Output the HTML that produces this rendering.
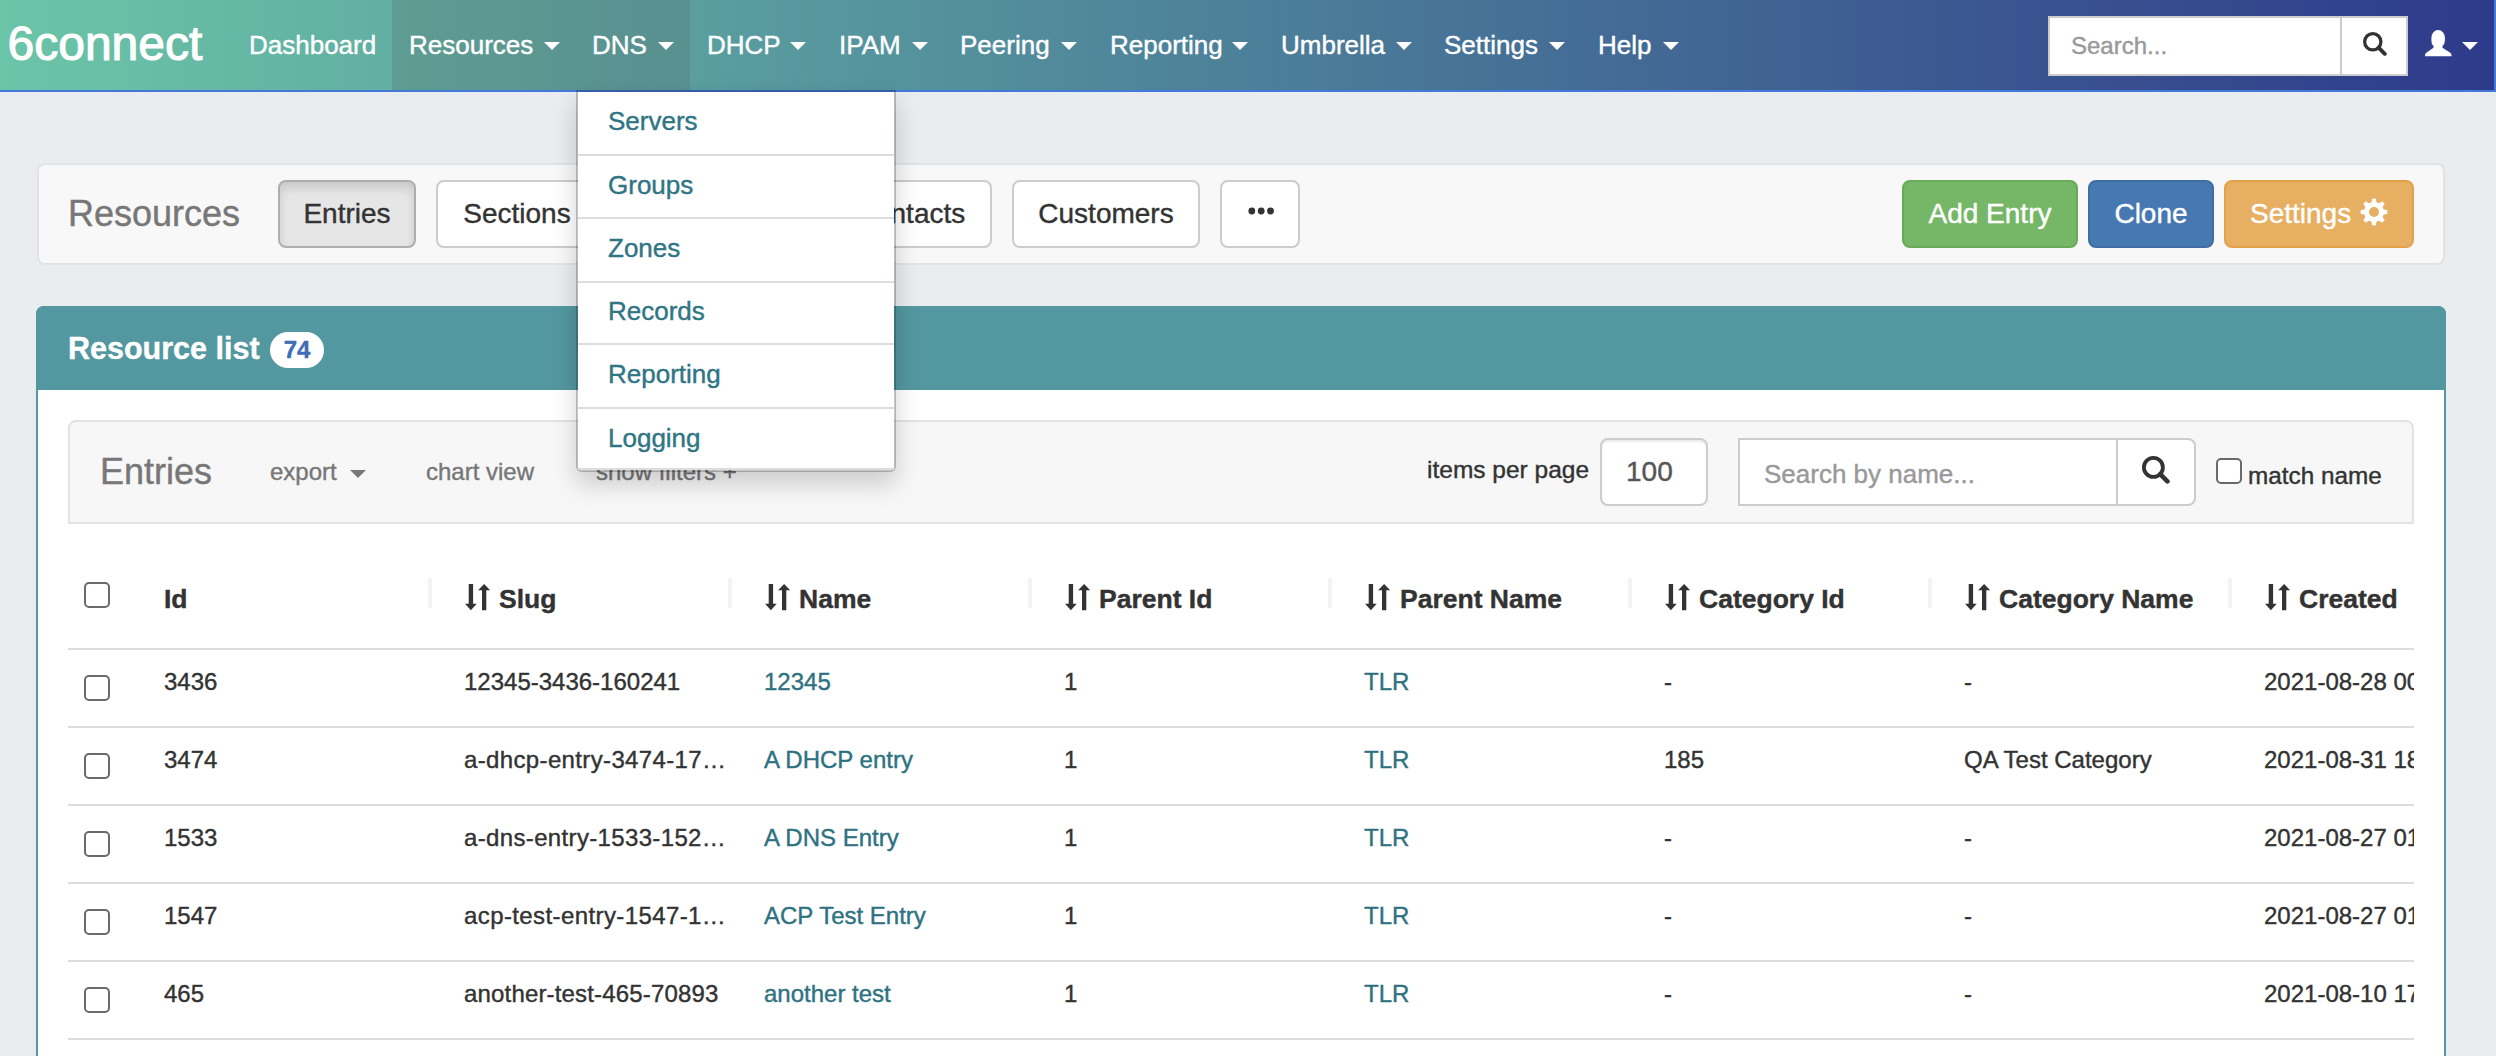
<!DOCTYPE html>
<html><head><meta charset="utf-8">
<style>
*{box-sizing:border-box;margin:0;padding:0}
html,body{width:2496px;height:1056px;overflow:hidden}
body{background:#e9edf0;font-family:"Liberation Sans",sans-serif;color:#333;position:relative}
.a{position:absolute;white-space:nowrap;line-height:1}
/* navbar */
#nav{position:absolute;left:0;top:0;width:2496px;height:92px;background:linear-gradient(to right,#6bc5a7,#2e3a8b);border-bottom:2px solid #4479dc;border-right:2px solid #4479dc}
#nav .dark{position:absolute;left:392px;top:0;width:298px;height:90px;background:rgba(83,83,83,0.2)}
#nav .it{position:absolute;white-space:nowrap;top:31.6px;font-size:26px;color:#fff;line-height:1}
.caret{position:absolute;width:0;height:0;border-top:8px solid #fff;border-left:8px solid transparent;border-right:8px solid transparent}
#logo{left:7.5px;top:20.4px;font-size:48px;color:#fff;-webkit-text-stroke:1.1px #fff}
.sbox{position:absolute;left:2048px;top:16px;width:360px;height:60px;background:#fff;border:2px solid #ccc}
.sbox .div{position:absolute;left:290px;top:0;width:2px;height:56px;background:#ccc}
/* subnav */
#sub{position:absolute;left:37px;top:162.5px;width:2408px;height:102.5px;background:#f8f8f8;border:2px solid #e2e3e4;border-radius:8px}
.btn{position:absolute;top:180px;height:68px;border:2px solid #ccc;border-radius:8px;background:#fff;font-size:28px;color:#333;text-align:center;line-height:64px}
.btn.active{background:#e6e6e6;border-color:#adadad;box-shadow:inset 0 6px 10px rgba(0,0,0,.125)}
.btn.g{background:#75b667;border-color:#67ab59;color:#fff}
.btn.b{background:#4679b1;border-color:#3e6ca3;color:#fff}
.btn.o{background:#e6af62;border-color:#e2a24a;color:#fff}
/* panel */
#panel{position:absolute;left:36px;top:306px;width:2410px;height:800px;background:#fff;border:2px solid #5397a0;border-radius:8px 8px 0 0}
#phead{position:absolute;left:36px;top:306px;width:2410px;height:84px;background:#5397a0;border-radius:8px 8px 0 0}
.badge{position:absolute;left:270px;top:332px;width:54px;height:36px;border-radius:18px;background:#fff;color:#3f6db5;font-weight:bold;font-size:24px;text-align:center;line-height:36px}
#tb{position:absolute;left:68px;top:420px;width:2346px;height:104px;background:#f7f7f7;border:2px solid #e3e3e3;border-radius:8px 8px 0 0}
.gray{color:#777}
.inp{position:absolute;background:#fff;border:2px solid #ccc;border-radius:8px}
.cb{position:absolute;width:26px;height:26px;border:2px solid #6a6a6a;border-radius:5px;background:#fff}
.hl{position:absolute;left:68px;width:2346px;height:2px;background:#ddd}
.sep{position:absolute;top:578px;width:4px;height:30px;background:#f3f3f3}
.th{position:absolute;white-space:nowrap;top:585.6px;font-size:26.5px;font-weight:bold;color:#333;line-height:1}
.td{position:absolute;white-space:nowrap;font-size:24px;line-height:1;color:#333}
.lnk{color:#2e7282}
/* dropdown */
#dd{position:absolute;left:576px;top:90px;width:320px;height:382px;background:#fff;background-clip:padding-box;border:2px solid rgba(0,0,0,.22);border-radius:0 0 6px 6px;box-shadow:0 12px 24px rgba(0,0,0,.175)}
.ddi{position:absolute;white-space:nowrap;left:608px;font-size:26px;color:#2f7584;line-height:1}
.dds{position:absolute;left:578px;width:316px;height:2px;background:#ddd}
body *{-webkit-text-stroke:0.4px currentColor}
@media (max-width:1300px){html{zoom:0.5}}
</style></head><body>

<div id="nav">
  <div class="dark"></div>
  <div class="a" id="logo">6connect</div>
  <div class="it" style="left:249px">Dashboard</div>
  <div class="it" style="left:409px">Resources</div><div class="caret" style="left:544px;top:42px"></div>
  <div class="it" style="left:592px">DNS</div><div class="caret" style="left:658px;top:42px"></div>
  <div class="it" style="left:707px">DHCP</div><div class="caret" style="left:790px;top:42px"></div>
  <div class="it" style="left:839px">IPAM</div><div class="caret" style="left:912px;top:42px"></div>
  <div class="it" style="left:960px">Peering</div><div class="caret" style="left:1061px;top:42px"></div>
  <div class="it" style="left:1110px">Reporting</div><div class="caret" style="left:1232px;top:42px"></div>
  <div class="it" style="left:1281px">Umbrella</div><div class="caret" style="left:1396px;top:42px"></div>
  <div class="it" style="left:1444px">Settings</div><div class="caret" style="left:1549px;top:42px"></div>
  <div class="it" style="left:1598px">Help</div><div class="caret" style="left:1663px;top:42px"></div>
  <div class="sbox"><div class="div"></div></div>
  <div class="a" style="left:2071px;top:33.7px;font-size:24px;color:#999">Search...</div>
  <div class="caret" style="left:2462px;top:42px"></div>
<svg width="24" height="24" viewBox="0 0 28 28" style="position:absolute;left:2362.7px;top:31.8px"><circle cx="11.4" cy="11.4" r="9.5" fill="none" stroke="#333" stroke-width="3.8"/><path d="M18.2 18.2L25.4 25.4" stroke="#333" stroke-width="4.6" stroke-linecap="round"/></svg><svg width="27" height="27" viewBox="0 0 27 27" style="position:absolute;left:2424.5px;top:29.7px"><path fill="#fff" d="M6.4 8A6.75 8 0 0 1 19.9 8V10.5A6.75 7 0 0 1 17.5 16V17.8L24.5 22.3Q26.5 23.5 26.5 25V26.3H0V25Q0 23.5 2 22.3L8.5 17.8V16A6.75 7 0 0 1 6.4 10.5Z"/></svg>
</div>

<div id="sub"></div>
<div class="a gray" style="left:68px;top:195.8px;font-size:36px">Resources</div>
<div class="btn active" style="left:278px;width:138px">Entries</div>
<div class="btn" style="left:436px;width:162px">Sections</div>
<div class="btn" style="left:618px;width:184px">Categories</div>
<div class="btn" style="left:822px;width:170px;padding-left:6px">Contacts</div>
<div class="btn" style="left:1012px;width:188px">Customers</div>
<div class="btn" style="left:1220px;width:80px"></div>
<div class="btn g" style="left:1902px;width:176px">Add Entry</div>
<div class="btn b" style="left:2088px;width:126px">Clone</div>
<div class="btn o" style="left:2224px;width:190px;text-align:left;padding-left:24px">Settings</div>
<svg width="28" height="28" viewBox="-14 -14 28 28" style="position:absolute;left:2359.9px;top:197.9px"><path fill="#fff" fill-rule="evenodd" d="M-2.19 -10.78L-1.98 -13.25A13.4 13.4 0 0 1 1.98 -13.25L2.19 -10.78A2.6 2.6 0 0 0 6.07 -9.17L7.97 -10.77A13.4 13.4 0 0 1 10.77 -7.97L9.17 -6.07A2.6 2.6 0 0 0 10.78 -2.19L13.25 -1.98A13.4 13.4 0 0 1 13.25 1.98L10.78 2.19A2.6 2.6 0 0 0 9.17 6.07L10.77 7.97A13.4 13.4 0 0 1 7.97 10.77L6.07 9.17A2.6 2.6 0 0 0 2.19 10.78L1.98 13.25A13.4 13.4 0 0 1 -1.98 13.25L-2.19 10.78A2.6 2.6 0 0 0 -6.07 9.17L-7.97 10.77A13.4 13.4 0 0 1 -10.77 7.97L-9.17 6.07A2.6 2.6 0 0 0 -10.78 2.19L-13.25 1.98A13.4 13.4 0 0 1 -13.25 -1.98L-10.78 -2.19A2.6 2.6 0 0 0 -9.17 -6.07L-10.77 -7.97A13.4 13.4 0 0 1 -7.97 -10.77L-6.07 -9.17A2.6 2.6 0 0 0 -2.19 -10.78Z M5 0A5 5 0 1 0 -5 0A5 5 0 1 0 5 0Z"/></svg><svg width="30" height="10" viewBox="0 0 30 10" style="position:absolute;left:1245px;top:205.8px"><g fill="#333"><circle cx="6.8" cy="5" r="3.4"/><circle cx="16.2" cy="5" r="3.4"/><circle cx="25.5" cy="5" r="3.4"/></g></svg>

<div id="panel"></div>
<div id="phead"></div>
<div class="a" style="left:68px;top:332.7px;font-size:30.5px;font-weight:bold;color:#fff">Resource list</div>
<div class="badge">74</div>

<div id="tb"></div>
<div class="a gray" style="left:100px;top:453.7px;font-size:36px">Entries</div>
<div class="a gray" style="left:270px;top:459.7px;font-size:24px">export</div>
<div class="caret" style="left:350px;top:470px;border-top-color:#777"></div>
<div class="a gray" style="left:426px;top:459.7px;font-size:24px">chart view</div>
<div class="a gray" style="left:596px;top:459.7px;font-size:24px">show filters +</div>
<div class="a" style="left:1427px;top:458.2px;font-size:24.5px">items per page</div>
<div class="inp" style="left:1600px;top:438px;width:108px;height:68px;box-shadow:inset 0 2px 2px rgba(0,0,0,.075)"></div>
<div class="a" style="left:1626px;top:458px;font-size:28px;color:#555">100</div>
<div class="inp" style="left:1738px;top:438px;width:458px;height:68px;border-radius:0 8px 8px 0"></div>
<div style="position:absolute;left:2116px;top:440px;width:2px;height:64px;background:#ccc"></div>
<div class="a" style="left:1764px;top:460.6px;font-size:26px;color:#999">Search by name...</div>
<div class="cb" style="left:2216px;top:458px"></div>
<svg width="28" height="28" viewBox="0 0 28 28" style="position:absolute;left:2142.25px;top:456px"><circle cx="11.4" cy="11.4" r="9.5" fill="none" stroke="#333" stroke-width="3.8"/><path d="M18.2 18.2L25.4 25.4" stroke="#333" stroke-width="4.6" stroke-linecap="round"/></svg>
<div class="a" style="left:2248px;top:464.2px;font-size:24.3px">match name</div>

<!-- table -->
<div class="cb" style="left:84px;top:582px"></div>
<div class="th" style="left:164px">Id</div>
<div class="sep" style="left:428px"></div><div class="th" style="left:499px">Slug</div>
<div class="sep" style="left:728px"></div><div class="th" style="left:799px">Name</div>
<div class="sep" style="left:1028px"></div><div class="th" style="left:1099px">Parent Id</div>
<div class="sep" style="left:1328px"></div><div class="th" style="left:1400px">Parent Name</div>
<div class="sep" style="left:1628px"></div><div class="th" style="left:1699px">Category Id</div>
<div class="sep" style="left:1928px"></div><div class="th" style="left:1999px">Category Name</div>
<div class="sep" style="left:2228px"></div><div class="th" style="left:2299px">Created</div>
<div class="hl" style="top:648px"></div>

<div style="position:absolute;left:0;top:0;width:2414px;height:1056px;overflow:hidden"><div class="cb" style="left:84px;top:674.5px"></div>
<div class="td" style="left:164px;top:669.7px">3436</div>
<div class="td" style="left:464px;top:669.7px">12345-3436-160241</div>
<div class="td lnk" style="left:764px;top:669.7px">12345</div>
<div class="td" style="left:1064px;top:669.7px">1</div>
<div class="td lnk" style="left:1364px;top:669.7px">TLR</div>
<div class="td" style="left:1664px;top:669.7px">-</div>
<div class="td" style="left:1964px;top:669.7px">-</div>
<div class="td" style="left:2264px;top:669.7px">2021-08-28 00:00:00</div>
<div class="hl" style="top:726px"></div>
<div class="cb" style="left:84px;top:752.5px"></div>
<div class="td" style="left:164px;top:747.7px">3474</div>
<div class="td" style="left:464px;top:747.7px"><span style="letter-spacing:0.36px">a-dhcp-entry-3474-17…</span></div>
<div class="td lnk" style="left:764px;top:747.7px">A DHCP entry</div>
<div class="td" style="left:1064px;top:747.7px">1</div>
<div class="td lnk" style="left:1364px;top:747.7px">TLR</div>
<div class="td" style="left:1664px;top:747.7px">185</div>
<div class="td" style="left:1964px;top:747.7px">QA Test Category</div>
<div class="td" style="left:2264px;top:747.7px">2021-08-31 18:00:00</div>
<div class="hl" style="top:804px"></div>
<div class="cb" style="left:84px;top:830.5px"></div>
<div class="td" style="left:164px;top:825.7px">1533</div>
<div class="td" style="left:464px;top:825.7px"><span style="letter-spacing:0.35px">a-dns-entry-1533-152…</span></div>
<div class="td lnk" style="left:764px;top:825.7px">A DNS Entry</div>
<div class="td" style="left:1064px;top:825.7px">1</div>
<div class="td lnk" style="left:1364px;top:825.7px">TLR</div>
<div class="td" style="left:1664px;top:825.7px">-</div>
<div class="td" style="left:1964px;top:825.7px">-</div>
<div class="td" style="left:2264px;top:825.7px">2021-08-27 01:00:00</div>
<div class="hl" style="top:882px"></div>
<div class="cb" style="left:84px;top:908.5px"></div>
<div class="td" style="left:164px;top:903.7px">1547</div>
<div class="td" style="left:464px;top:903.7px"><span style="letter-spacing:0.4px">acp-test-entry-1547-1…</span></div>
<div class="td lnk" style="left:764px;top:903.7px">ACP Test Entry</div>
<div class="td" style="left:1064px;top:903.7px">1</div>
<div class="td lnk" style="left:1364px;top:903.7px">TLR</div>
<div class="td" style="left:1664px;top:903.7px">-</div>
<div class="td" style="left:1964px;top:903.7px">-</div>
<div class="td" style="left:2264px;top:903.7px">2021-08-27 01:00:00</div>
<div class="hl" style="top:960px"></div>
<div class="cb" style="left:84px;top:986.5px"></div>
<div class="td" style="left:164px;top:981.7px">465</div>
<div class="td" style="left:464px;top:981.7px"><span style="letter-spacing:0.17px">another-test-465-70893</span></div>
<div class="td lnk" style="left:764px;top:981.7px">another test</div>
<div class="td" style="left:1064px;top:981.7px">1</div>
<div class="td lnk" style="left:1364px;top:981.7px">TLR</div>
<div class="td" style="left:1664px;top:981.7px">-</div>
<div class="td" style="left:1964px;top:981.7px">-</div>
<div class="td" style="left:2264px;top:981.7px">2021-08-10 17:00:00</div>
<div class="hl" style="top:1038px"></div></div>
<svg width="26" height="27" viewBox="0 0 26 27" style="position:absolute;left:464.8px;top:583.6px"><path fill="#333" d="M3.7 0H8.1V19.8H11.75L5.9 26.3L0 19.8H3.7Z M19.1 0L25.2 6.2H21.3V26.3H17V6.2H13.1Z"/></svg><svg width="26" height="27" viewBox="0 0 26 27" style="position:absolute;left:764.8px;top:583.6px"><path fill="#333" d="M3.7 0H8.1V19.8H11.75L5.9 26.3L0 19.8H3.7Z M19.1 0L25.2 6.2H21.3V26.3H17V6.2H13.1Z"/></svg><svg width="26" height="27" viewBox="0 0 26 27" style="position:absolute;left:1064.8px;top:583.6px"><path fill="#333" d="M3.7 0H8.1V19.8H11.75L5.9 26.3L0 19.8H3.7Z M19.1 0L25.2 6.2H21.3V26.3H17V6.2H13.1Z"/></svg><svg width="26" height="27" viewBox="0 0 26 27" style="position:absolute;left:1364.8px;top:583.6px"><path fill="#333" d="M3.7 0H8.1V19.8H11.75L5.9 26.3L0 19.8H3.7Z M19.1 0L25.2 6.2H21.3V26.3H17V6.2H13.1Z"/></svg><svg width="26" height="27" viewBox="0 0 26 27" style="position:absolute;left:1664.8px;top:583.6px"><path fill="#333" d="M3.7 0H8.1V19.8H11.75L5.9 26.3L0 19.8H3.7Z M19.1 0L25.2 6.2H21.3V26.3H17V6.2H13.1Z"/></svg><svg width="26" height="27" viewBox="0 0 26 27" style="position:absolute;left:1964.8px;top:583.6px"><path fill="#333" d="M3.7 0H8.1V19.8H11.75L5.9 26.3L0 19.8H3.7Z M19.1 0L25.2 6.2H21.3V26.3H17V6.2H13.1Z"/></svg><svg width="26" height="27" viewBox="0 0 26 27" style="position:absolute;left:2264.8px;top:583.6px"><path fill="#333" d="M3.7 0H8.1V19.8H11.75L5.9 26.3L0 19.8H3.7Z M19.1 0L25.2 6.2H21.3V26.3H17V6.2H13.1Z"/></svg>

<div id="dd"></div>
<div class="ddi" style="top:108px">Servers</div>
<div class="dds" style="top:154px"></div>
<div class="ddi" style="top:171.5px">Groups</div>
<div class="dds" style="top:217px"></div>
<div class="ddi" style="top:235px">Zones</div>
<div class="dds" style="top:280.5px"></div>
<div class="ddi" style="top:298px">Records</div>
<div class="dds" style="top:343px"></div>
<div class="ddi" style="top:361px">Reporting</div>
<div class="dds" style="top:406.5px"></div>
<div class="ddi" style="top:424.5px">Logging</div>
<div class="dds" style="top:468px"></div>

</body></html>
